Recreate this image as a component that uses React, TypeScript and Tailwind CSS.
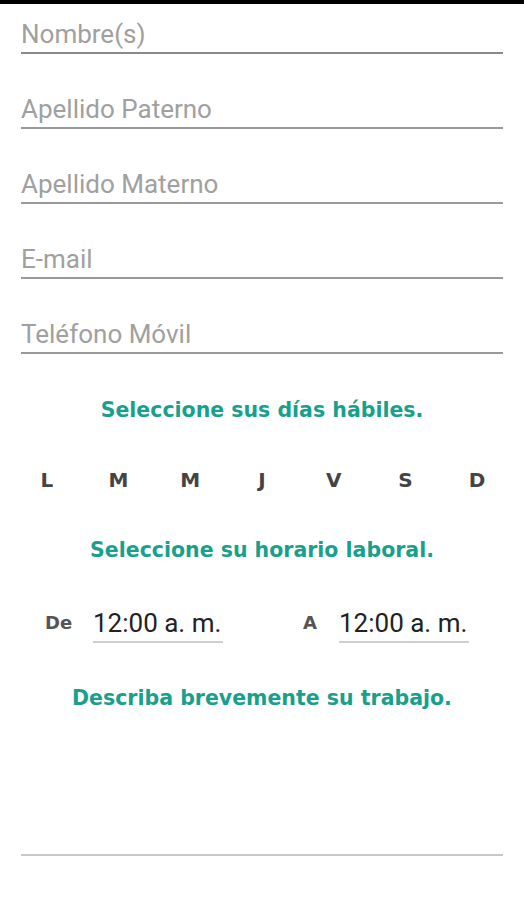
const fields = ["Nombre(s)", "Apellido Paterno", "Apellido Materno", "E-mail", "Teléfono Móvil"];
const days = ["L", "M", "M", "J", "V", "S", "D"];

const heading = "text-center text-[20.5px] leading-[24px] font-bold text-[#17a08c] [font-family:'DejaVu_Sans',sans-serif]";

function TimeField({ value }: { value: string }) {
    return (
        <div className="w-[130px] h-[35px] border-b-2 border-[#cfcfcf] flex items-start">
            <span className="text-[26px] leading-[30px] text-[#222] [font-family:Roboto,sans-serif]">{value}</span>
        </div>
    );
}

export default function App() {
    return (
        <div className="w-[524px] h-[900px] bg-white overflow-hidden">
            <div className="h-[4px] bg-black" />
            <div className="px-[21px]">
                {fields.map((f, i) => (
                    <div
                        key={f}
                        className={`h-[50px] flex items-end pb-[3px] border-b-2 ${i === 0 ? "border-[#8a8a8a]" : "border-[#999]"} ${i > 0 ? "mt-[25px]" : ""}`}
                    >
                        <span className="text-[26px] leading-[30px] text-[#a0a0a0] [font-family:Roboto,sans-serif]">{f}</span>
                    </div>
                ))}

                <div className={`${heading} mt-[44px]`}>Seleccione sus días hábiles.</div>

                <div className="-mx-[10px] mt-[46px] grid grid-cols-7">
                    {days.map((d, i) => (
                        <span key={i} className="text-center text-[20px] leading-[24px] font-bold text-[#444] [font-family:'DejaVu_Sans',sans-serif]">
                            {d}
                        </span>
                    ))}
                </div>

                <div className={`${heading} mt-[46px]`}>Seleccione su horario laboral.</div>

                <div className="mt-[46px] flex items-start">
                    <span className="ml-[24px] w-[27px] text-[18px] leading-[30px] font-bold text-[#555] [font-family:'DejaVu_Sans',sans-serif]">De</span>
                    <div className="ml-[21px]">
                        <TimeField value="12:00 a. m." />
                    </div>
                    <span className="ml-[80px] w-[14px] text-[18px] leading-[30px] font-bold text-[#555] [font-family:'DejaVu_Sans',sans-serif]">A</span>
                    <div className="ml-[22px]">
                        <TimeField value="12:00 a. m." />
                    </div>
                </div>

                <div className={`${heading} mt-[43px]`}>Describa brevemente su trabajo.</div>

                <div className="h-[146px] border-b-2 border-[#c8c8c8]" />
            </div>
        </div>
    );
}
